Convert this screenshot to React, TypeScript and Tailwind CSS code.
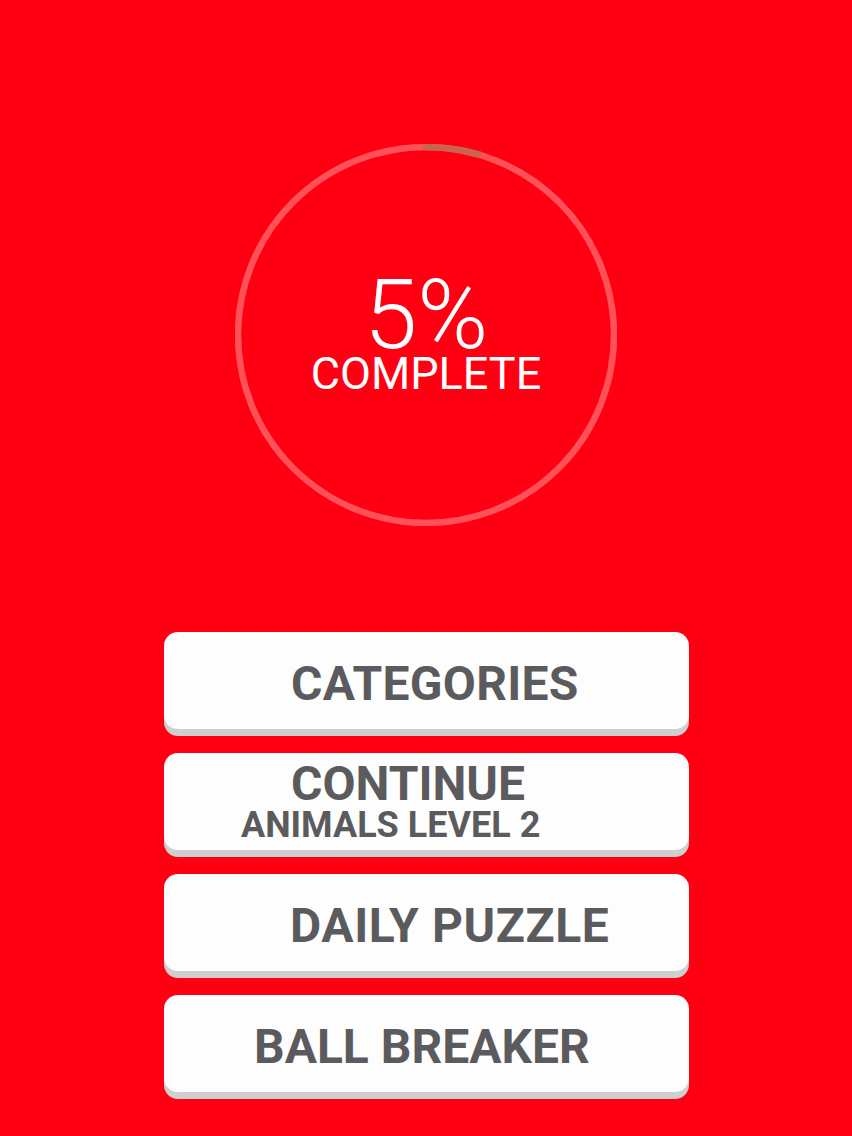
import React from 'react';

const R = 188;
const C = 2 * Math.PI * R;

function ProgressRing({ percent }: { percent: number }) {
  return (
    <div className="relative mx-auto mt-[144px] h-[382px] w-[382px]">
      <svg className="absolute inset-0" width="382" height="382" viewBox="0 0 382 382">
        <circle cx="191" cy="191" r={R} fill="none" stroke="#ff5258" strokeWidth="6.5" />
        <circle
          cx="191"
          cy="191"
          r={R}
          fill="none"
          stroke="#c9654f"
          strokeWidth="6.5"
          strokeDasharray={`${(C * percent) / 100} ${C}`}
          transform="rotate(-91 191 191)"
        />
      </svg>
      <div className="relative flex flex-col items-center pt-[132px] text-white font-['Roboto',sans-serif]">
        <span className="text-[96px] leading-[78px] font-light">{percent}%</span>
        <span className="text-[45px] leading-[40px] font-normal">COMPLETE</span>
      </div>
    </div>
  );
}

function MenuButton({ children, className = '' }: { children: React.ReactNode; className?: string }) {
  return (
    <div
      className={`h-[97px] w-[525px] rounded-[14px] bg-[#fdfdfd] shadow-[0_7px_0_#cfcfcf] text-[#5b5b5d] font-['Roboto',sans-serif] font-bold ${className}`}
    >
      {children}
    </div>
  );
}

export default function App() {
  return (
    <div className="min-h-[1136px] w-full bg-[#ff0013] flex flex-col items-center overflow-hidden">
      <ProgressRing percent={5} />

      <div className="mt-[106px] flex flex-col gap-[24px] pl-[1px]">
        <MenuButton className="flex items-center pt-[6px] pl-[127px]">
          <span className="text-[48px] leading-[48px] tracking-[0.3px]">CATEGORIES</span>
        </MenuButton>
        <MenuButton className="flex flex-col pt-[9px]">
          <span className="pl-[127px] text-[48px] leading-[44px]">CONTINUE</span>
          <span className="pl-[77px] mt-[3px] text-[36px] leading-[32px]">ANIMALS LEVEL 2</span>
        </MenuButton>
        <MenuButton className="flex items-center pt-[6px] pl-[126px]">
          <span className="text-[48px] leading-[48px] tracking-[0.6px]">DAILY PUZZLE</span>
        </MenuButton>
        <MenuButton className="flex items-center pt-[6px] pl-[90px]">
          <span className="text-[48px] leading-[48px]">BALL BREAKER</span>
        </MenuButton>
      </div>
    </div>
  );
}
